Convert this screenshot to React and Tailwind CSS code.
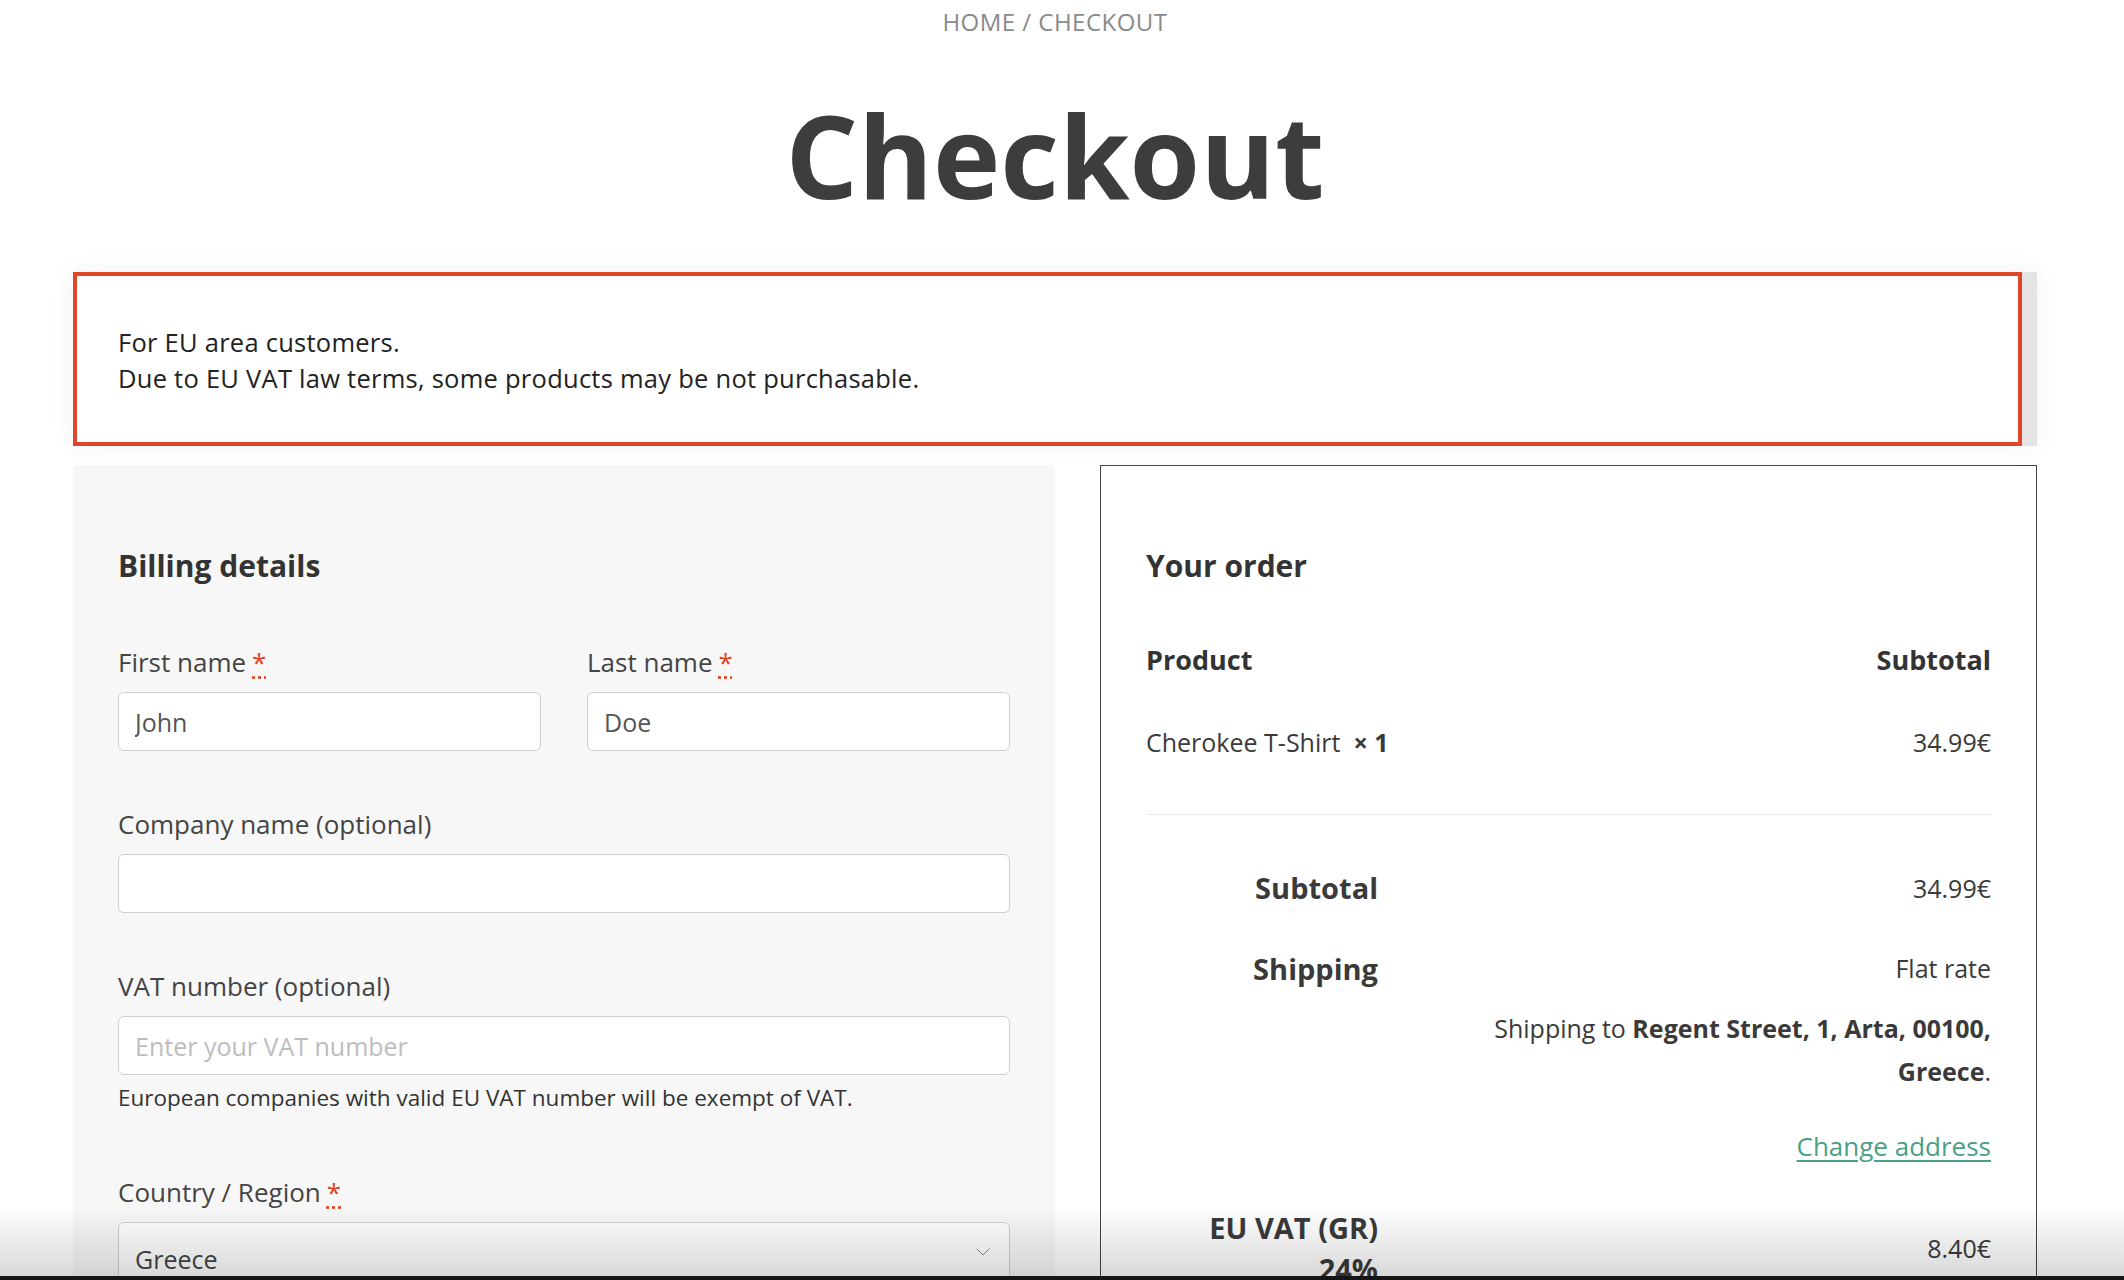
import { ChevronDown } from "lucide-react";

const font = { fontFamily: "'Open Sans', 'Liberation Sans', sans-serif" };

function Req() {
  return <span className="ml-[6px] text-[#e2401c] underline decoration-dotted decoration-[#e2401c] underline-offset-4">*</span>;
}

function Field({ label, required, children, className = "" }) {
  return (
    <div className={className}>
      <label className="block text-[26px] leading-[36px] text-[#444]">
        {label}
        {required && <Req />}
      </label>
      <div className="mt-[12px]">{children}</div>
    </div>
  );
}

function Input({ value, placeholder }) {
  return (
    <input
      defaultValue={value}
      placeholder={placeholder}
      className="block h-[59px] w-full rounded-[6px] border border-[#cfcfcf] bg-white px-[16px] text-[25px] text-[#555] outline-none placeholder:text-[#bdbdbd]"
      style={font}
    />
  );
}

function TotalRow({ label, children, className = "" }) {
  return (
    <div className={`flex ${className}`}>
      <div className="w-[232px] shrink-0 text-right text-[29px] font-bold leading-[41px] text-[#3a3a3a]">{label}</div>
      <div className="flex-1 text-right">{children}</div>
    </div>
  );
}

export default function App() {
  return (
    <div className="relative h-[1280px] overflow-hidden bg-white text-[#3a3a3a]" style={font}>
      <div className="pl-[73px] pr-[87px]">
        <div className="pt-[7px] text-center text-[24px] leading-[30px] tracking-[0.02em] text-[#8a8a8a]">HOME / CHECKOUT</div>
        <h1 className="mt-[53px] text-center text-[114px] font-bold leading-[130px] text-[#3d3d3d]">Checkout</h1>

        <div className="mt-[52px] flex shadow-[0_0_24px_rgba(0,0,0,0.06)]">
          <div className="flex-1 border-[4px] border-[#e0462b] bg-white pb-[46px] pl-[41px] pt-[48px] text-[25.5px] leading-[36px] tracking-[0.01em] text-[#222]">
            <p>For EU area customers.</p>
            <p>Due to EU VAT law terms, some products may be not purchasable.</p>
          </div>
          <div className="w-[15px] bg-[#e4e4e4]" />
        </div>

        <div className="mt-[19px] flex gap-[45px]">
          <div className="w-[982px] shrink-0 bg-[#f7f7f7] px-[45px] pt-[81px] pb-[60px]">
            <h2 className="text-[30px] font-bold leading-[40px] text-[#333]">Billing details</h2>
            <div className="mt-[58px] flex gap-[46px]">
              <Field label="First name" required className="flex-1">
                <Input value="John" />
              </Field>
              <Field label="Last name" required className="flex-1">
                <Input value="Doe" />
              </Field>
            </div>
            <Field label="Company name (optional)" className="mt-[55px]">
              <Input />
            </Field>
            <Field label="VAT number (optional)" className="mt-[55px]">
              <Input placeholder="Enter your VAT number" />
            </Field>
            <p className="mt-[8px] text-[22.5px] leading-[30px] text-[#333]">European companies with valid EU VAT number will be exempt of VAT.</p>
            <Field label="Country / Region" required className="mt-[61px]">
              <div className="flex h-[59px] items-center justify-between rounded-[6px] border border-[#cfcfcf] bg-white pl-[16px] pr-[14px] pt-[16px] text-[25px] text-[#444]">
                <span>Greece</span>
                <ChevronDown className="h-[24px] w-[24px] -translate-y-[8px] text-[#888]" strokeWidth={1} />
              </div>
            </Field>
          </div>

          <div className="flex-1 border border-[#444] bg-white px-[45px] pt-[80px] pb-[60px]">
            <h2 className="text-[30px] font-bold leading-[40px] text-[#333]">Your order</h2>
            <div className="mt-[56px] flex justify-between text-[27px] font-bold leading-[36px] text-[#333]">
              <span>Product</span>
              <span>Subtotal</span>
            </div>
            <div className="mt-[46px] flex justify-between text-[25px] leading-[36px]">
              <span>
                Cherokee T-Shirt&nbsp;&nbsp;<strong className="font-bold">× 1</strong>
              </span>
              <span>34.99€</span>
            </div>
            <div className="mt-[54px] h-px bg-[#e8e8e8]" />
            <TotalRow label="Subtotal" className="mt-[52px] items-center">
              <span className="text-[25px] leading-[40px]">34.99€</span>
            </TotalRow>
            <TotalRow label="Shipping" className="mt-[40px] items-start">
              <div className="text-[25px]">
                <div className="leading-[40px]">Flat rate</div>
                <div className="mt-[19px] leading-[43px]">
                  Shipping to <strong className="font-bold">Regent Street, 1, Arta, 00100,</strong>
                  <br />
                  <strong className="font-bold">Greece</strong>.
                </div>
                <a href="#" className="mt-[35px] block text-[26px] leading-[36px] text-[#4a9f84] underline underline-offset-4">
                  Change address
                </a>
              </div>
            </TotalRow>
            <TotalRow label={<>EU VAT (GR)<br />24%</>} className="mt-[43px] items-center">
              <span className="text-[25px] leading-[40px]">8.40€</span>
            </TotalRow>
          </div>
        </div>
      </div>

      <div className="pointer-events-none absolute inset-x-0 bottom-0">
        <div className="h-[70px] bg-gradient-to-b from-transparent to-black/15" />
        <div className="h-[4px] bg-[#151515]" />
      </div>
    </div>
  );
}
